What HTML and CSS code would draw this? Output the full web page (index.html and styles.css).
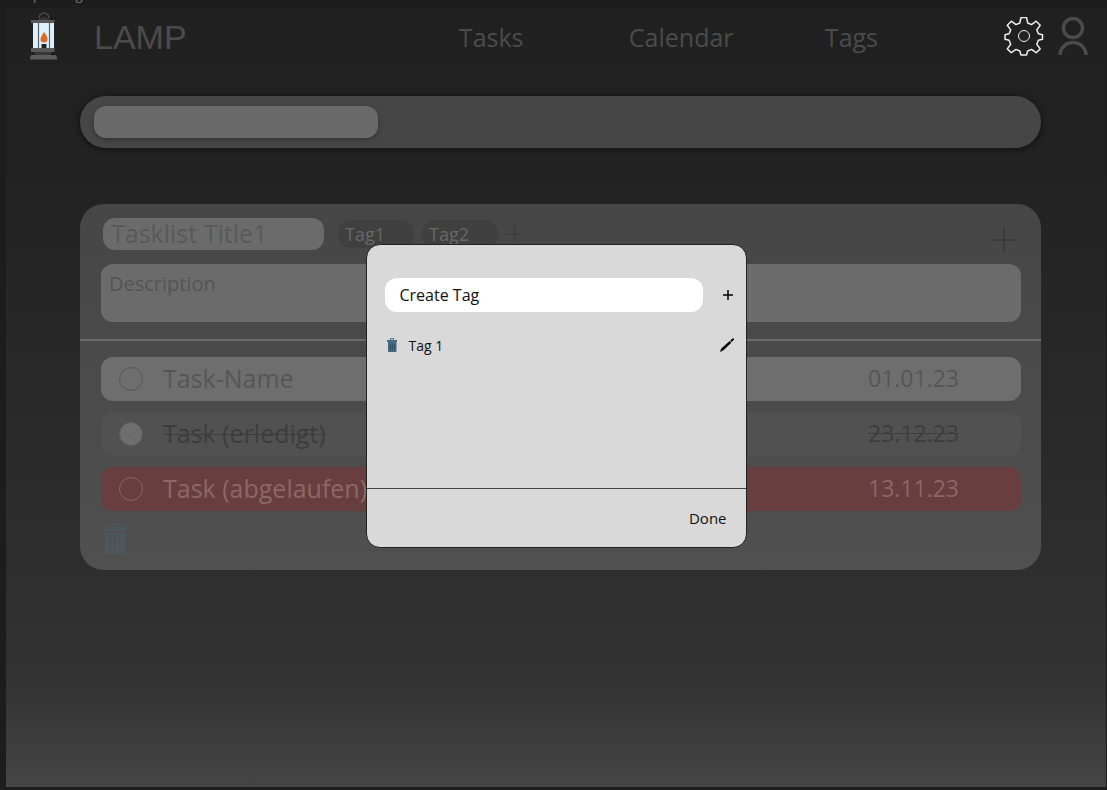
FILE: index.html
```html
<!DOCTYPE html>
<html lang="de">
<head>
<meta charset="utf-8">
<meta name="viewport" content="width=device-width, initial-scale=1">
<title>LAMP</title>
<link rel="stylesheet" href="styles.css">
</head>
<body>
<div class="frame-label"><span>Setup Dialog</span></div>
<div class="frame">
  <header class="header">
    <svg class="lamp" viewBox="0 0 28 50" aria-hidden="true">
      <path d="M9 6a5 5 0 0 1 10 0" fill="none" stroke="#4b4b4b" stroke-width="1.500"/>
      <path d="M7 10q1-4 7-5q6 1 7 5z" fill="#383838"/>
      <path d="M21 5l4 5h-4zM21 42l4-2-4 5z" fill="#111"/>
      <rect x="3" y="11" width="21" height="26" fill="#def0fb"/>
      <path d="M8.500 11v26M19.500 11v26" stroke="#56646d" stroke-width="1.200"/>
      <path d="M14 20q4 5 3.500 7.500a3.500 3 0 0 1-7 0q0-2.500 3.500-7.500z" fill="#dc6b24"/>
      <rect x="11.500" y="32" width="5" height="5" fill="#222"/>
      <path d="M1 8h23.500v3H1zM1 36h23.500v4H1z" fill="#595959"/>
      <path d="M4 40h18q-1 4-4 4H8q-3 0-4-4z" fill="#383838"/>
      <path d="M2 43h23q2 0 2 4.500H0q0-4.500 2-4.500z" fill="#5c5c5c"/>
    </svg>
    <h1 class="brand">LAMP</h1>
    <nav class="nav">
      <a href="#tasks">Tasks</a>
      <a href="#calendar">Calendar</a>
      <a href="#tags">Tags</a>
    </nav>
    <div class="actions">
      <button class="icon-button" aria-label="Settings">
        <svg class="gear" viewBox="0 0 40 40" fill="none" stroke="#ededed" stroke-width="1.500" stroke-linejoin="round">
          <path d="M17 0.500h5.500l1.200 5.500 3.800 1.600 4.700-3.400 4 4-3.400 4.700 1.600 3.800 4.100 1v4.600l-4.100 1-1.600 3.900 3.400 4.700-4 3.800-4.700-3.300-3.800 1.600-1.200 4H17l-1.200-4-3.800-1.600-4.700 3.300-4-3.800 3.400-4.700L5.100 23.300l-4.100-1v-4.600l4.100-1L6.700 12.900 3.300 8.200l4-4L12 7.600 15.800 6z"/>
          <circle cx="20" cy="19" r="5.500" stroke-width="1"/>
        </svg>
      </button>
      <button class="icon-button" aria-label="Profile">
        <svg class="person" viewBox="0 0 30 40" fill="none" stroke="#4b4b4b" stroke-width="3.500">
          <circle cx="15" cy="11" r="9.500"/>
          <path d="M2 38a13 12.500 0 0 1 26 0"/>
        </svg>
      </button>
    </div>
  </header>

  <main class="main">
    <div class="searchbar"><input class="search" type="text" aria-label="Search"></div>

    <section class="card">
      <div class="card-head">
        <input class="title" type="text" value="Tasklist Title1" aria-label="Tasklist title">
        <span class="chip">Tag1</span>
        <span class="chip">Tag2</span>
        <button class="icon-button" aria-label="Add tag">
          <svg class="plus-small" viewBox="0 0 16 16" stroke="#393939"><path d="M0 8.500h16M8.500 0v16"/></svg>
        </button>
        <button class="icon-button add-task" aria-label="Add task">
          <svg class="plus-large" viewBox="0 0 24 24" stroke="#393939" stroke-width="1.500"><path d="M0 12h24M12 0v24"/></svg>
        </button>
      </div>
      <textarea class="description" aria-label="Description">Description</textarea>
      <hr class="divider">
      <ul class="tasks">
        <li class="task">
          <label><input class="check" type="checkbox"><span class="task-name">Task-Name</span></label>
          <time class="date">01.01.23</time>
        </li>
        <li class="task done">
          <label>
            <span class="check-wrap">
              <input class="check" type="checkbox" checked>
              <svg class="tick" viewBox="0 0 24 24" fill="none" stroke="#656565"><path d="M6 10l6 5 7-8"/></svg>
            </span>
            <span class="task-name">Task (erledigt)</span>
          </label>
          <time class="date">23.12.23</time>
        </li>
        <li class="task expired">
          <label><input class="check" type="checkbox"><span class="task-name">Task (abgelaufen)</span></label>
          <time class="date">13.11.23</time>
        </li>
      </ul>
      <button class="icon-button delete-list" aria-label="Delete tasklist">
        <svg class="trash-large" viewBox="0 0 22 31" fill="#4d585e">
          <path d="M7 4V2q0-2 2-2h4q2 0 2 2v2h-2V2H9v2z"/><path d="M0 4h22v4H0z"/><path fill-rule="evenodd" d="M1 10h20v21H2q-1 0-1-2zM5 12v16h1.500V12zm5 0v16h1.500V12zm5 0v16h1.500V12z"/>
        </svg>
      </button>
    </section>
  </main>

  <div class="overlay">
    <div class="dialog" role="dialog" aria-label="Tags">
      <div class="dialog-body">
        <div class="create-row">
          <input class="create" type="text" value="Create Tag" aria-label="Create Tag">
          <button class="icon-button" aria-label="Add">
            <svg class="plus-tag" viewBox="0 0 12 12" stroke="#000" stroke-width="1.500"><path d="M1 6h10M6 1v10"/></svg>
          </button>
        </div>
        <div class="tag-row">
          <button class="icon-button" aria-label="Delete tag">
            <svg class="trash-small" viewBox="0 0 10 14" fill="#4a6d86">
              <path d="M3 2.500V1q0-1 1-1h2q1 0 1 1v1.500H6V1H4v1.500z"/><path d="M0 2h10v2H0z"/><path d="M1 4h8.500v10h-8.500z"/><path d="M3 5.500v7M5.250 5.500v7M7.500 5.500v7" stroke="#284358" stroke-width=".8"/>
            </svg>
          </button>
          <span class="tag-name">Tag 1</span>
          <button class="icon-button" aria-label="Edit tag">
            <svg class="pencil" viewBox="0 0 14 14"><path d="M0 14l1.200-3.500L9.700 3l1.600 1.700L3.500 12.300zM10.200 2.400L12.500.5q1-.8 1.500.5 0 .8-.5 1.200L11.900 4z"/></svg>
          </button>
        </div>
      </div>
      <div class="dialog-foot"><button class="done-button">Done</button></div>
    </div>
  </div>
</div>
</body>
</html>
```

FILE: styles.css
```css
* { box-sizing: border-box; }

body {
  margin: 0;
  min-height: 100vh;
  display: flex;
  flex-direction: column;
  padding: 0 1px 3px 6px;
  background: #1d1d1d;
  color: #4b4b4b;
  font-family: "Open Sans", "Noto Sans", sans-serif;
  font-size: 25px;
  font-weight: 400;
}

button, input, textarea {
  font: inherit;
  color: inherit;
  border: 0;
  margin: 0;
}

svg { display: block; }

.frame-label {
  height: 8px;
  overflow: hidden;
  font-size: 13px;
  line-height: 14px;
  color: #777;
}

.frame-label span { display: block; margin-top: -12px; }

.frame {
  flex: 1;
  position: relative;
  background: linear-gradient(#202020, #222 20%, #2e2e2e 72%, #333 87%, #454545);
}

.header {
  display: grid;
  grid-template-columns: 28px 21fr auto 11fr;
  align-items: center;
  height: 58px;
  padding: 0 18px 0 24px;
}

.lamp { width: 28px; height: 50px; }

.brand {
  margin: 0 0 0 36px;
  font-family: "Liberation Sans", sans-serif;
  font-size: 34px;
  font-weight: 400;
  line-height: 44px;
}

.nav {
  display: grid;
  grid-template-columns: 170px 196px auto;
}

.nav a { color: inherit; text-decoration: none; }

.actions {
  display: flex;
  justify-content: flex-end;
  align-items: center;
  gap: 14px;
}

.icon-button { padding: 0; background: none; }

.gear { width: 40px; height: 40px; }
.person { width: 30px; height: 40px; }

.main { padding: 30px 65px 0 74px; }

.searchbar {
  padding: 10px 14px;
  border-radius: 26px;
  background: #464646;
  box-shadow: 0 1px 4px 2px #171717;
}

.search {
  display: block;
  width: 284px;
  height: 32px;
  border-radius: 12px;
  background: #6a6a6a;
  box-shadow: 0 2px 4px #333;
}

.card {
  margin-top: 56px;
  padding-top: 14px;
  padding-bottom: 16px;
  border-radius: 24px;
  background: linear-gradient(#464646, #505050);
}

.card-head {
  display: flex;
  align-items: center;
  height: 32px;
  padding: 0 25px 0 23px;
}

.title {
  width: 221px;
  height: 32px;
  margin-right: 14px;
  padding: 0 8px 2px;
  border-radius: 12px;
  background: #6b6b6b;
  color: #595959;
}

.chip {
  width: 76px;
  height: 28px;
  margin-right: 8px;
  padding-left: 7px;
  border-radius: 12px;
  background: #404040;
  color: #686868;
  font-size: 18px;
  line-height: 28px;
}

.plus-small { width: 16px; height: 16px; }
.plus-large { width: 24px; height: 24px; }
.add-task { margin-left: auto; padding-top: 12px; }

.description {
  display: block;
  width: calc(100% - 41px);
  height: 58px;
  margin: 14px 20px 17px 21px;
  padding: 6px 8px;
  border-radius: 12px;
  background: #6b6b6b;
  color: #555;
  font-size: 20px;
  line-height: 28px;
  resize: none;
}

.divider {
  height: 2px;
  margin: 0;
  border: 0;
  background: #6a6a6a;
}

.tasks {
  display: grid;
  gap: 11px;
  margin: 0;
  padding: 16px 20px 12px 21px;
  list-style: none;
}

.task {
  display: flex;
  justify-content: space-between;
  align-items: center;
  height: 44px;
  padding: 0 18px;
  border-radius: 12px;
  background: #6e6e6e;
  color: #565656;
  line-height: 32px;
}

.task label { display: flex; align-items: center; gap: 20px; }
.task-name, .date { padding-bottom: 2px; }
.date { width: 135px; font-size: 23px; }

.check {
  display: block;
  appearance: none;
  width: 24px;
  height: 24px;
  border: 1px solid currentColor;
  border-radius: 50%;
}

.check:checked {
  border: 1px solid #5c5c5c;
  background: #6e6e6e;
}

.check-wrap { position: relative; }
.tick { position: absolute; inset: 0; pointer-events: none; }

.done { background: #515151; color: #3d3d3d; }
.done .task-name, .done .date { text-decoration: line-through; text-decoration-thickness: 1px; }
.expired { background: #683e3e; color: #8c6868; }

.delete-list { display: block; margin-left: 24px; }
.trash-large { width: 22px; height: 31px; }

.overlay {
  position: absolute;
  inset: 0 0 3px;
  display: grid;
  place-items: center;
}

.dialog {
  width: 381px;
  border: 1px solid #222;
  border-radius: 14px;
  background: #d9d9d9;
  color: #111;
  font-size: 15px;
}

.dialog-body {
  min-height: 243px;
  padding: 33px 12px 0 18px;
}

.create-row {
  display: flex;
  align-items: center;
  justify-content: space-between;
}

.create {
  width: 318px;
  height: 34px;
  padding: 0 15px;
  border-radius: 12px;
  background: #fff;
  font-size: 16px;
}

.plus-tag { width: 12px; height: 12px; }

.tag-row {
  display: flex;
  align-items: center;
  height: 24px;
  margin-top: 21px;
  padding-left: 2px;
}

.trash-small { width: 10px; height: 14px; }
.tag-name { flex: 1; padding-left: 12px; font-size: 14px; }
.pencil { width: 14px; height: 14px; }

.dialog-foot {
  display: flex;
  justify-content: flex-end;
  padding: 18px 19px;
  border-top: 1px solid #444;
}

.done-button { padding: 0; background: none; line-height: 22px; }
```
